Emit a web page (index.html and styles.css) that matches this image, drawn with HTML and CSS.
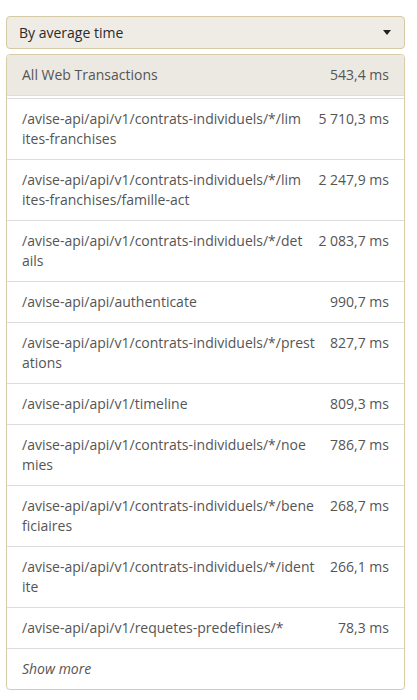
FILE: index.html
```html
<!DOCTYPE html>
<html>
<head>
<meta charset="utf-8">
<link rel="stylesheet" href="styles.css">
</head>
<body>
<div class="wrap">
  <div class="select">
    <span class="select-label">By average time</span>
    <span class="caret"></span>
  </div>
  <div class="panel">
    <div class="panel-head">
      <span class="name">All Web Transactions</span>
      <span class="val">543,4 ms</span>
    </div>
    <ul class="list">
      <li class="row"><span class="name">/avise-api/api/v1/contrats-individuels/*/limites-franchises</span><span class="val">5 710,3 ms</span></li>
      <li class="row"><span class="name">/avise-api/api/v1/contrats-individuels/*/limites-franchises/famille-act</span><span class="val">2 247,9 ms</span></li>
      <li class="row"><span class="name">/avise-api/api/v1/contrats-individuels/*/details</span><span class="val">2 083,7 ms</span></li>
      <li class="row"><span class="name">/avise-api/api/authenticate</span><span class="val">990,7 ms</span></li>
      <li class="row"><span class="name">/avise-api/api/v1/contrats-individuels/*/prestations</span><span class="val">827,7 ms</span></li>
      <li class="row"><span class="name">/avise-api/api/v1/timeline</span><span class="val">809,3 ms</span></li>
      <li class="row"><span class="name">/avise-api/api/v1/contrats-individuels/*/noemies</span><span class="val">786,7 ms</span></li>
      <li class="row"><span class="name">/avise-api/api/v1/contrats-individuels/*/beneficiaires</span><span class="val">268,7 ms</span></li>
      <li class="row"><span class="name">/avise-api/api/v1/contrats-individuels/*/identite</span><span class="val">266,1 ms</span></li>
      <li class="row"><span class="name">/avise-api/api/v1/requetes-predefinies/*</span><span class="val">78,3 ms</span></li>
      <li class="row more"><span class="name">Show more</span></li>
    </ul>
  </div>
</div>
</body>
</html>
```
FILE: styles.css
```css
html, body {
  margin: 0;
  padding: 0;
  background: #ffffff;
}
body {
  font-family: "Open Sans", "Noto Sans", sans-serif;
  font-size: 14px;
  line-height: 20px;
  color: #555555;
}
.wrap {
  width: 399px;
  margin-left: 6px;
  padding-top: 16px;
  display: flex;
  flex-direction: column;
  gap: 5px;
}
.select {
  box-sizing: border-box;
  height: 33px;
  display: flex;
  align-items: center;
  justify-content: space-between;
  padding: 0 13px 0 12px;
  background: #efece5;
  border: 1px solid #d5c9a6;
  border-radius: 4px;
  color: #2a2a2a;
}
.caret {
  width: 0;
  height: 0;
  border-left: 4px solid transparent;
  border-right: 4px solid transparent;
  border-top: 5px solid #222;
}
.panel {
  border: 1px solid #d8cca9;
  border-radius: 4px;
  overflow: hidden;
  box-shadow: 0 1px 2px rgba(0,0,0,0.06);
}
.panel-head {
  display: flex;
  justify-content: space-between;
  padding: 10px 15px;
  background: #ece9e2;
  border-bottom: 1px solid #e2ded5;
}
.list {
  list-style: none;
  margin: 0;
  padding: 2px 0 0;
}
.row {
  display: flex;
  align-items: flex-start;
  gap: 15px;
  padding: 10px 15px;
  border-top: 1px solid #dddddd;
}
.row .name {
  flex: 1;
  min-width: 0;
  word-break: break-all;
}
.val {
  flex: none;
  white-space: nowrap;
}
.more .name {
  font-style: italic;
}
```
